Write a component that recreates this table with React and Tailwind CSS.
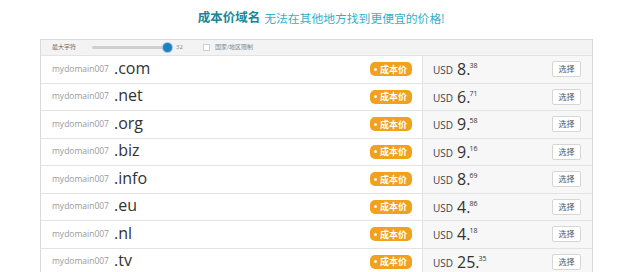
import React from 'react';

const rows = [
  { tld: '.com', int: '8', dec: '38' },
  { tld: '.net', int: '6', dec: '71' },
  { tld: '.org', int: '9', dec: '58' },
  { tld: '.biz', int: '9', dec: '16' },
  { tld: '.info', int: '8', dec: '69' },
  { tld: '.eu', int: '4', dec: '86' },
  { tld: '.nl', int: '4', dec: '18' },
  { tld: '.tv', int: '25', dec: '35' },
];

const font = { fontFamily: '"Open Sans", "Noto Sans CJK SC", sans-serif' };

const DomainRow = ({ tld, int, dec }) => (
  <div className="flex h-[27.5px] border-t border-[#e3e3e3]">
    <div className="flex flex-1 items-center bg-white pl-[11px] pr-[10px]">
      <span className="text-[8.5px] text-[#9a9a9a]">mydomain007</span>
      <span className="ml-[5px] text-[16px] leading-none text-[#333] -mt-[3px]">{tld}</span>
      <span className="ml-auto flex h-[14px] items-center rounded-[5px] bg-[#f0a21e] pl-[4px] pr-[5px] text-[9px] font-semibold text-white">
        <span className="mr-[3px] h-[3px] w-[3px] rounded-full bg-white/90" />
        成本价
      </span>
    </div>
    <div className="flex w-[170px] items-center border-l border-[#e3e3e3] bg-[#f7f7f7] pl-[10px] pr-[11px]">
      <span className="text-[10px] text-[#444] mt-[3px]">USD</span>
      <span className="ml-[4px] text-[16px] leading-none text-[#333]">
        {int}.
        <sup className="-ml-[1px] text-[7px] -top-[7px]">{dec}</sup>
      </span>
      <button className="ml-auto flex h-[16px] w-[29px] items-center justify-center rounded-[2px] border border-[#d6d6d6] bg-white text-[8px] text-[#555]">
        选择
      </button>
    </div>
  </div>
);

export default function App() {
  return (
    <div className="h-[272px] w-[640px] overflow-hidden bg-white" style={font}>
      <div className="flex h-[39px] items-center justify-center pb-[2px] pl-[2px]">
        <span className="text-[12.5px] font-bold text-[#17879a]">成本价域名</span>
        <span className="ml-[4px] text-[11.8px] text-[#33b1c9]">无法在其他地方找到更便宜的价格!</span>
      </div>
      <div className="mx-[40px] w-[553px] border border-b-0 border-[#dadada]">
        <div className="flex h-[15px] items-center bg-[#f3f3f3] pl-[11px] text-[6px] text-[#666]">
          <span>最大字符</span>
          <div className="relative ml-[16px] h-[3px] w-[76px] rounded-full bg-[#cfcfcf]">
            <span className="absolute -top-[3px] right-[-4px] h-[9px] w-[9px] rounded-full bg-[#1f7fc3] ring-1 ring-[#9cc6e4]" />
          </div>
          <span className="ml-[8px] text-[#888]">32</span>
          <span className="ml-[20px] h-[7px] w-[7px] border border-[#cfcfcf] bg-white" />
          <span className="ml-[5px] text-[#888]">国家/地区限制</span>
        </div>
        {rows.map((r) => (
          <DomainRow key={r.tld} {...r} />
        ))}
      </div>
    </div>
  );
}
